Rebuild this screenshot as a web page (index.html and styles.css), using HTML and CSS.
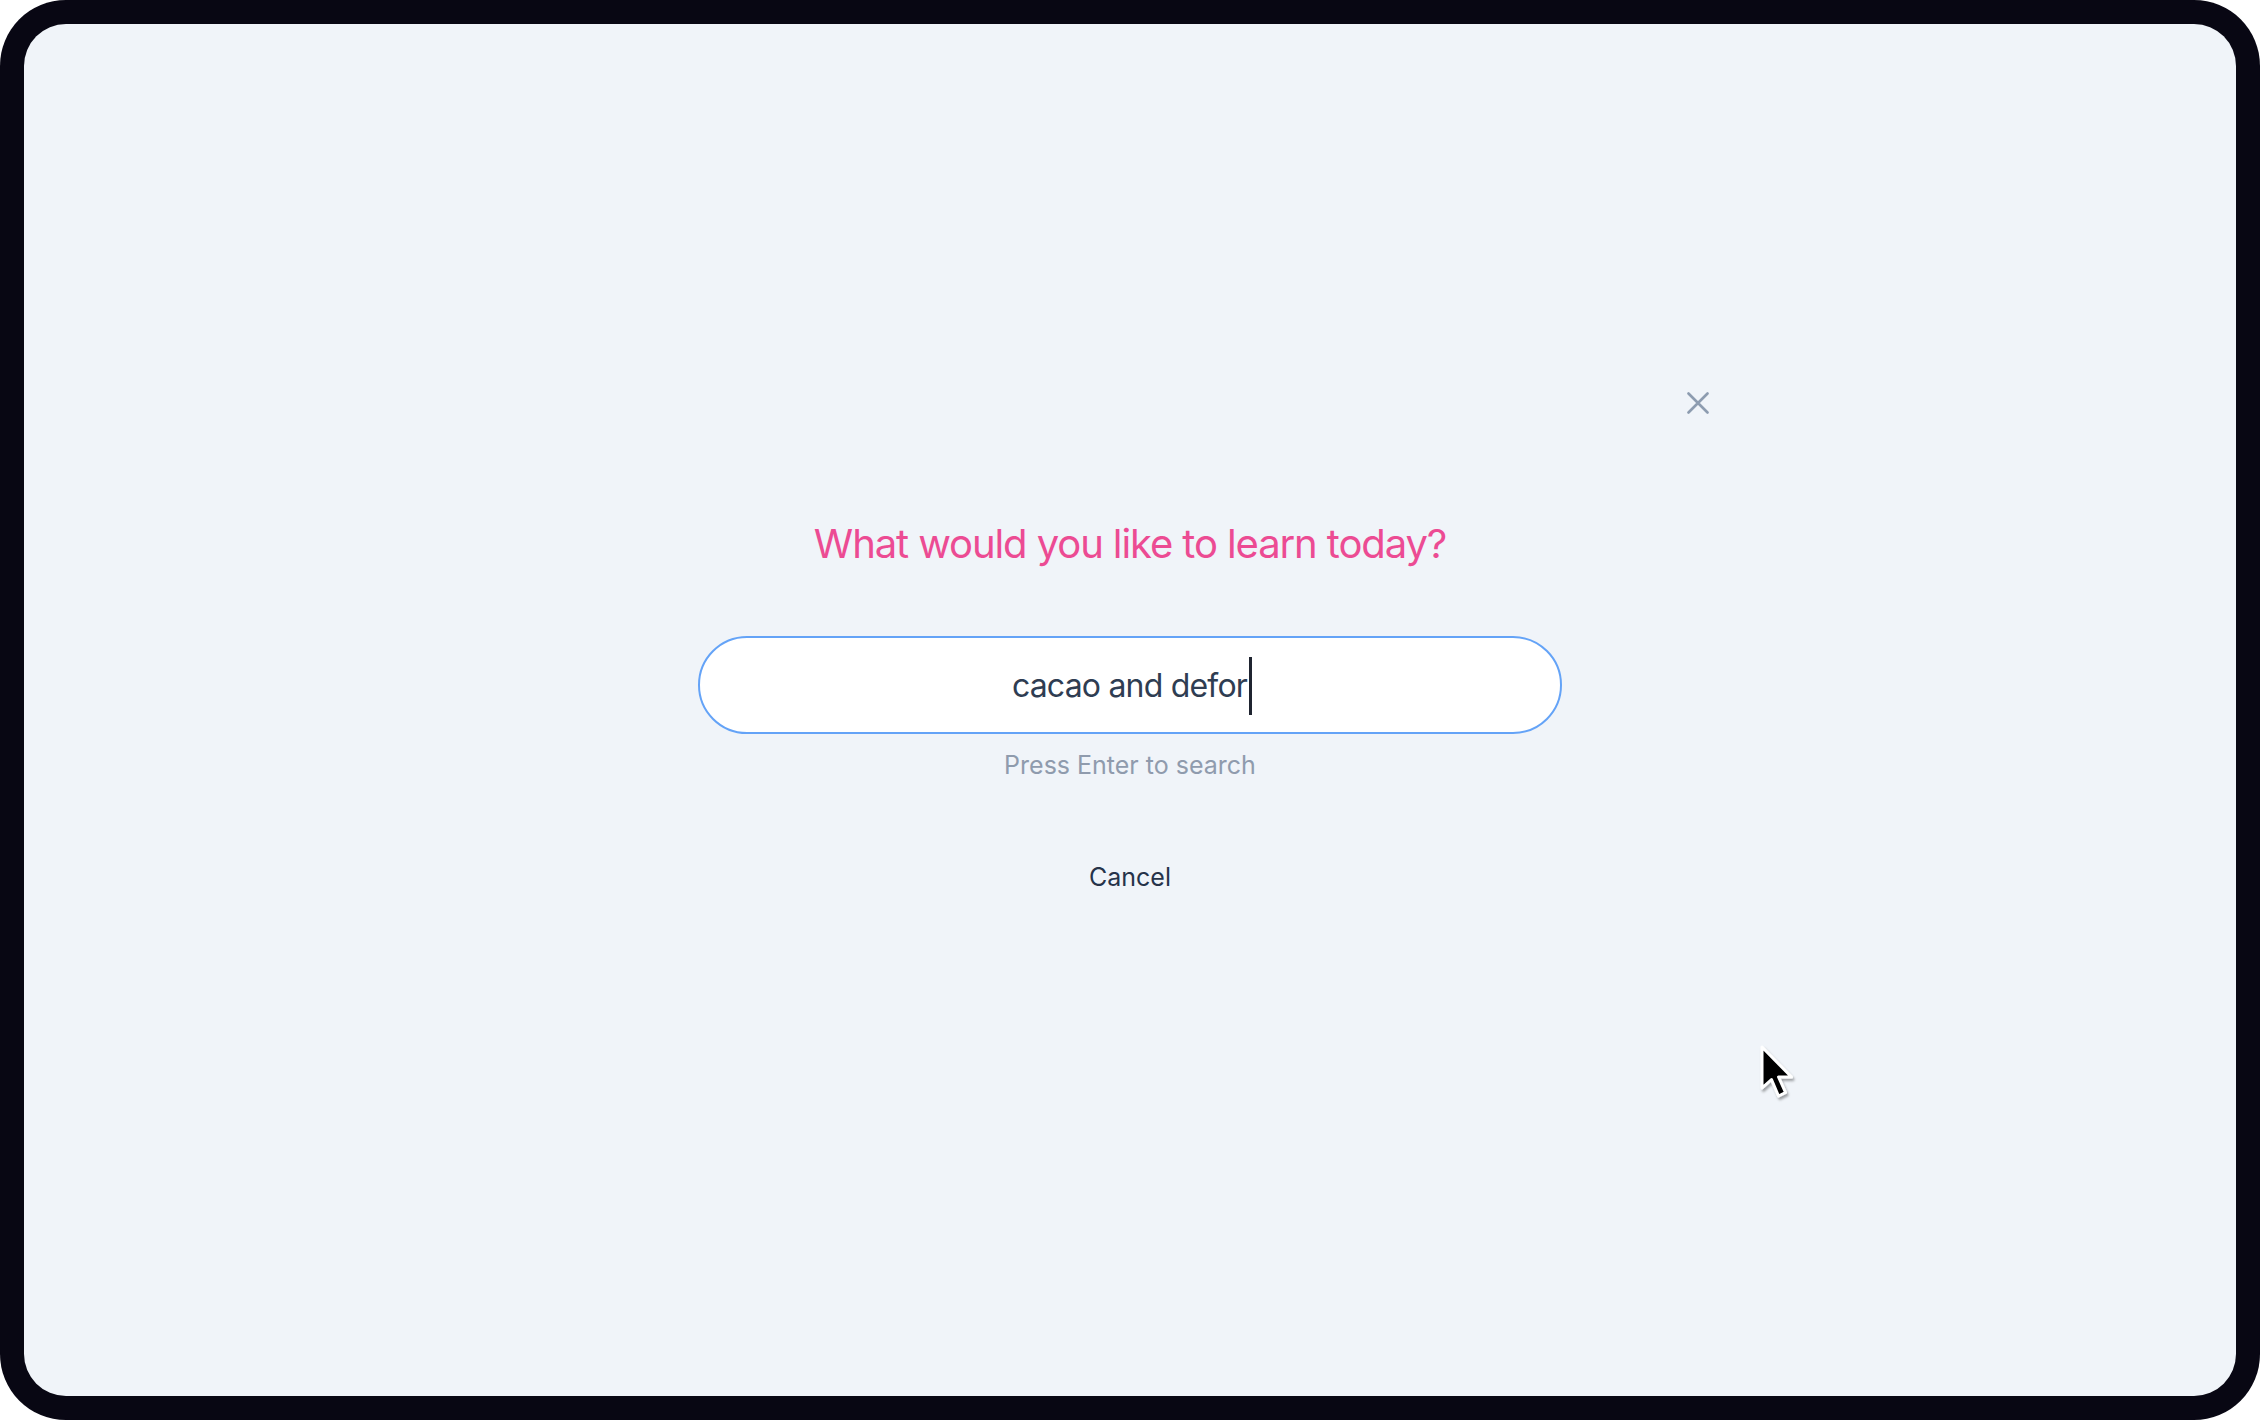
FILE: index.html
```html
<!DOCTYPE html>
<html lang="en">
<head>
<meta charset="utf-8">
<title>Search</title>
<link rel="stylesheet" href="styles.css">
</head>
<body>
<div class="frame">
  <div class="screen">
    <div class="modal">
      <div class="close-row">
        <button class="close" aria-label="Close">
          <svg width="22" height="22" viewBox="0 0 22 22"><path d="M1.5 1.5 L20.5 20.5 M20.5 1.5 L1.5 20.5" stroke="#8d9cb0" stroke-width="2.6" stroke-linecap="round" fill="none"/></svg>
        </button>
      </div>
      <h1 class="title">What would you like to learn today?</h1>
      <div class="search">
        <span class="search-text">cacao and defor</span><span class="caret"></span>
      </div>
      <p class="hint">Press Enter to search</p>
      <button class="cancel">Cancel</button>
    </div>
    <svg class="pointer" width="40" height="62" viewBox="0 0 40 62">
      <defs>
        <filter id="sh" x="-30%" y="-30%" width="160%" height="160%">
          <feDropShadow dx="1.5" dy="2.5" stdDeviation="1.3" flood-color="#000" flood-opacity="0.35"/>
        </filter>
      </defs>
      <path d="M3 2 L3 43 L12.5 34.5 L19.5 51 L26.5 47.5 L19.5 32 L32.5 32 Z" fill="#000" stroke="#fff" stroke-width="3" stroke-linejoin="round" filter="url(#sh)"/>
    </svg>
  </div>
</div>
</body>
</html>
```

FILE: styles.css
```css
* { box-sizing: border-box; }
html, body { margin: 0; padding: 0; background: #ffffff; }
body { font-family: Inter, "Noto Sans", sans-serif; }

.frame {
  width: 2260px;
  height: 1420px;
  background: #080713;
  border-radius: 66px;
  padding: 24px;
}

.screen {
  position: relative;
  height: 100%;
  background: #f0f4f9;
  border-radius: 42px;
  display: flex;
  flex-direction: column;
  align-items: center;
}

.modal {
  width: 1160px;
  margin-top: 365px;
  display: flex;
  flex-direction: column;
  align-items: center;
}

.close-row {
  align-self: stretch;
  display: flex;
  justify-content: flex-end;
  margin-right: -2px;
}

.close {
  width: 28px;
  height: 28px;
  padding: 0;
  border: 0;
  background: transparent;
  display: flex;
  align-items: center;
  justify-content: center;
}

.title {
  margin: 103px 0 0;
  font-size: 40px;
  line-height: 48px;
  font-weight: 400;
  color: #ec4b93;
  letter-spacing: -1.1px;
}

.search {
  margin-top: 68px;
  width: 864px;
  height: 98px;
  border: 2px solid #64a3f7;
  border-radius: 49px;
  background: #ffffff;
  display: flex;
  align-items: center;
  justify-content: center;
  padding-left: 4px;
}

.search-text {
  font-size: 32px;
  color: #2f3d52;
  line-height: 40px;
  letter-spacing: -0.8px;
  margin-top: 2px;
}

.caret {
  display: inline-block;
  width: 3px;
  height: 58px;
  background: #1f2430;
  margin-left: 2px;
  margin-top: 2px;
}

.hint {
  margin: 15px 0 0;
  font-size: 25px;
  line-height: 32px;
  color: #8f9bad;
}

.cancel {
  margin-top: 80px;
  padding: 0;
  border: 0;
  background: transparent;
  font-family: Inter, "Noto Sans", sans-serif;
  font-size: 25px;
  line-height: 32px;
  color: #26334a;
}

.pointer {
  position: absolute;
  left: 1735px;
  top: 1021px;
}
```
